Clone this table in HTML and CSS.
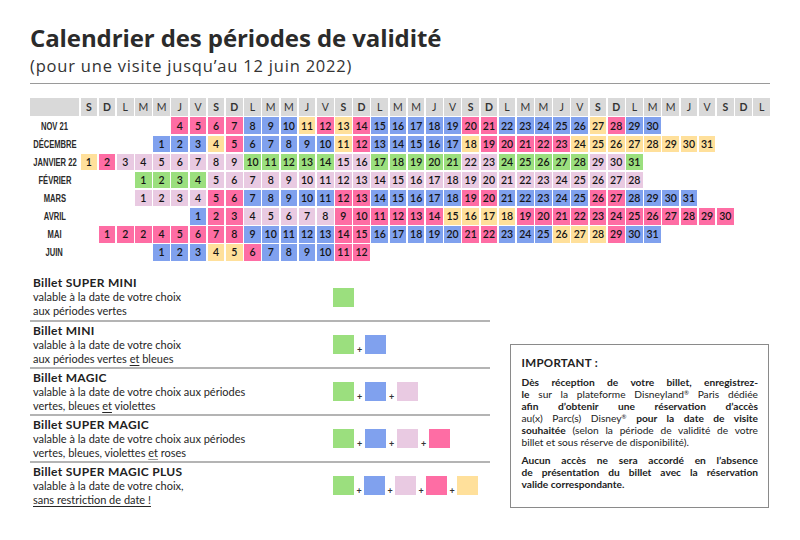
FILE: index.html
```html
<!DOCTYPE html>
<html lang="fr">
<head>
<meta charset="utf-8">
<title>Calendrier des périodes de validité</title>
<link rel="stylesheet" href="styles.css">
</head>
<body>
<div class="page">
  <h1 class="title">Calendrier des périodes de validité</h1>
  <p class="subtitle">(pour une visite jusqu’au 12 juin 2022)</p>
  <div class="rule"></div>

  <div class="cal">
    <div class="hd"></div>
    <div class="hd we">S</div><div class="hd we">D</div><div class="hd">L</div><div class="hd">M</div><div class="hd">M</div><div class="hd">J</div><div class="hd">V</div>
    <div class="hd we">S</div><div class="hd we">D</div><div class="hd">L</div><div class="hd">M</div><div class="hd">M</div><div class="hd">J</div><div class="hd">V</div>
    <div class="hd we">S</div><div class="hd we">D</div><div class="hd">L</div><div class="hd">M</div><div class="hd">M</div><div class="hd">J</div><div class="hd">V</div>
    <div class="hd we">S</div><div class="hd we">D</div><div class="hd">L</div><div class="hd">M</div><div class="hd">M</div><div class="hd">J</div><div class="hd">V</div>
    <div class="hd we">S</div><div class="hd we">D</div><div class="hd">L</div><div class="hd">M</div><div class="hd">M</div><div class="hd">J</div><div class="hd">V</div>
    <div class="hd we">S</div><div class="hd we">D</div><div class="hd">L</div>

    <div class="lbl"><span>NOV 21</span></div>
    <div class="d p s7">4</div><div class="d p">5</div><div class="d p">6</div><div class="d p">7</div><div class="d b">8</div><div class="d b">9</div><div class="d b">10</div><div class="d y">11</div><div class="d p">12</div><div class="d y">13</div><div class="d p">14</div><div class="d b">15</div><div class="d b">16</div><div class="d b">17</div><div class="d b">18</div><div class="d b">19</div><div class="d p">20</div><div class="d p">21</div><div class="d b">22</div><div class="d b">23</div><div class="d b">24</div><div class="d b">25</div><div class="d b">26</div><div class="d y">27</div><div class="d p">28</div><div class="d b">29</div><div class="d b">30</div>

    <div class="lbl"><span>DÉCEMBRE</span></div>
    <div class="d b s6">1</div><div class="d b">2</div><div class="d b">3</div><div class="d y">4</div><div class="d p">5</div><div class="d b">6</div><div class="d b">7</div><div class="d b">8</div><div class="d b">9</div><div class="d b">10</div><div class="d y">11</div><div class="d p">12</div><div class="d b">13</div><div class="d b">14</div><div class="d b">15</div><div class="d b">16</div><div class="d b">17</div><div class="d y">18</div><div class="d p">19</div><div class="d p">20</div><div class="d p">21</div><div class="d p">22</div><div class="d p">23</div><div class="d y">24</div><div class="d y">25</div><div class="d y">26</div><div class="d y">27</div><div class="d y">28</div><div class="d y">29</div><div class="d y">30</div><div class="d y">31</div>

    <div class="lbl"><span>JANVIER 22</span></div>
    <div class="d y s2">1</div><div class="d p">2</div><div class="d v">3</div><div class="d v">4</div><div class="d v">5</div><div class="d v">6</div><div class="d v">7</div><div class="d v">8</div><div class="d v">9</div><div class="d g">10</div><div class="d g">11</div><div class="d g">12</div><div class="d g">13</div><div class="d g">14</div><div class="d v">15</div><div class="d v">16</div><div class="d g">17</div><div class="d g">18</div><div class="d g">19</div><div class="d g">20</div><div class="d g">21</div><div class="d v">22</div><div class="d v">23</div><div class="d g">24</div><div class="d g">25</div><div class="d g">26</div><div class="d g">27</div><div class="d g">28</div><div class="d v">29</div><div class="d v">30</div><div class="d g">31</div>

    <div class="lbl"><span>FÉVRIER</span></div>
    <div class="d g s5">1</div><div class="d g">2</div><div class="d g">3</div><div class="d g">4</div><div class="d v">5</div><div class="d v">6</div><div class="d v">7</div><div class="d v">8</div><div class="d v">9</div><div class="d v">10</div><div class="d v">11</div><div class="d v">12</div><div class="d v">13</div><div class="d v">14</div><div class="d v">15</div><div class="d v">16</div><div class="d v">17</div><div class="d v">18</div><div class="d v">19</div><div class="d v">20</div><div class="d v">21</div><div class="d v">22</div><div class="d v">23</div><div class="d v">24</div><div class="d v">25</div><div class="d v">26</div><div class="d v">27</div><div class="d v">28</div>

    <div class="lbl"><span>MARS</span></div>
    <div class="d v s5">1</div><div class="d v">2</div><div class="d v">3</div><div class="d v">4</div><div class="d p">5</div><div class="d p">6</div><div class="d b">7</div><div class="d b">8</div><div class="d b">9</div><div class="d b">10</div><div class="d b">11</div><div class="d p">12</div><div class="d p">13</div><div class="d b">14</div><div class="d b">15</div><div class="d b">16</div><div class="d b">17</div><div class="d b">18</div><div class="d p">19</div><div class="d p">20</div><div class="d b">21</div><div class="d b">22</div><div class="d b">23</div><div class="d b">24</div><div class="d b">25</div><div class="d p">26</div><div class="d p">27</div><div class="d b">28</div><div class="d b">29</div><div class="d b">30</div><div class="d b">31</div>

    <div class="lbl"><span>AVRIL</span></div>
    <div class="d b s8">1</div><div class="d p">2</div><div class="d p">3</div><div class="d v">4</div><div class="d v">5</div><div class="d v">6</div><div class="d v">7</div><div class="d v">8</div><div class="d p">9</div><div class="d p">10</div><div class="d p">11</div><div class="d p">12</div><div class="d p">13</div><div class="d p">14</div><div class="d y">15</div><div class="d y">16</div><div class="d y">17</div><div class="d y">18</div><div class="d p">19</div><div class="d p">20</div><div class="d p">21</div><div class="d p">22</div><div class="d p">23</div><div class="d p">24</div><div class="d p">25</div><div class="d p">26</div><div class="d p">27</div><div class="d p">28</div><div class="d p">29</div><div class="d p">30</div>

    <div class="lbl"><span>MAI</span></div>
    <div class="d p s3">1</div><div class="d p">2</div><div class="d p">2</div><div class="d p">4</div><div class="d p">5</div><div class="d p">6</div><div class="d p">7</div><div class="d p">8</div><div class="d b">9</div><div class="d b">10</div><div class="d b">11</div><div class="d b">12</div><div class="d b">13</div><div class="d p">14</div><div class="d p">15</div><div class="d b">16</div><div class="d b">17</div><div class="d b">18</div><div class="d b">19</div><div class="d b">20</div><div class="d p">21</div><div class="d p">22</div><div class="d b">23</div><div class="d b">24</div><div class="d b">25</div><div class="d y">26</div><div class="d y">27</div><div class="d y">28</div><div class="d p">29</div><div class="d b">30</div><div class="d b">31</div>

    <div class="lbl"><span>JUIN</span></div>
    <div class="d b s6">1</div><div class="d b">2</div><div class="d b">3</div><div class="d y">4</div><div class="d y">5</div><div class="d p">6</div><div class="d b">7</div><div class="d b">8</div><div class="d b">9</div><div class="d b">10</div><div class="d p">11</div><div class="d p">12</div>
  </div>

  <div class="bottom">
    <div class="legend">
      <div class="tk">
        <div class="tk-text">
          <div class="tk-name">Billet SUPER MINI</div>
          <div>valable à la date de votre choix</div>
          <div>aux périodes vertes</div>
        </div>
        <div class="sw"><i class="g"></i></div>
      </div>
      <div class="tk">
        <div class="tk-text">
          <div class="tk-name">Billet MINI</div>
          <div>valable à la date de votre choix</div>
          <div>aux périodes vertes <u>et</u> bleues</div>
        </div>
        <div class="sw"><i class="g"></i><span class="plus">+</span><i class="b"></i></div>
      </div>
      <div class="tk">
        <div class="tk-text">
          <div class="tk-name">Billet MAGIC</div>
          <div>valable à la date de votre choix aux périodes</div>
          <div>vertes, bleues <u>et</u> violettes</div>
        </div>
        <div class="sw"><i class="g"></i><span class="plus">+</span><i class="b"></i><span class="plus">+</span><i class="v"></i></div>
      </div>
      <div class="tk">
        <div class="tk-text">
          <div class="tk-name">Billet SUPER MAGIC</div>
          <div>valable à la date de votre choix aux périodes</div>
          <div>vertes, bleues, violettes <u class="grey">et</u> roses</div>
        </div>
        <div class="sw"><i class="g"></i><span class="plus">+</span><i class="b"></i><span class="plus">+</span><i class="v"></i><span class="plus">+</span><i class="p"></i></div>
      </div>
      <div class="tk">
        <div class="tk-text">
          <div class="tk-name">Billet SUPER MAGIC PLUS</div>
          <div>valable à la date de votre choix,</div>
          <div><u>sans restriction de date !</u></div>
        </div>
        <div class="sw tight"><i class="g"></i><span class="plus">+</span><i class="b"></i><span class="plus">+</span><i class="v"></i><span class="plus">+</span><i class="p"></i><span class="plus">+</span><i class="y"></i></div>
      </div>
    </div>

    <div class="imp">
      <p class="imp-h">IMPORTANT :</p>
      <p class="imp-p">
        <span class="ln"><b>Dès réception de votre billet, enregistrez-</b></span>
        <span class="ln"><b>le</b> sur la plateforme Disneyland<sup>®</sup> Paris dédiée</span>
        <span class="ln"><b>afin d’obtenir une réservation d’accès</b></span>
        <span class="ln">au(x) Parc(s) Disney<sup>®</sup> <b>pour la date de visite</b></span>
        <span class="ln"><b>souhaitée</b> (selon la période de validité de votre</span>
        <span class="ln last">billet et sous réserve de disponibilité).</span>
      </p>
      <p class="imp-p strong">
        <span class="ln">Aucun accès ne sera accordé en l’absence</span>
        <span class="ln">de présentation du billet avec la réservation</span>
        <span class="ln last">valide correspondante.</span>
      </p>
    </div>
  </div>
</div>
</body>
</html>
```

FILE: styles.css
```css
* { box-sizing: border-box; }

body {
  margin: 0;
  background: #ffffff;
  font-family: Lato, "Liberation Sans", sans-serif;
  color: #222222;
}

.page {
  width: 800px;
  padding: 22.5px 30px 0 30px;
}

.title {
  margin: 0;
  font: 700 24px/30px "Open Sans", Lato, sans-serif;
  letter-spacing: -0.1px;
  color: #2b2b2b;
}

.subtitle {
  margin: 4.1px 0 0 0;
  font: 400 16.5px/17px "Open Sans", Lato, sans-serif;
  letter-spacing: 0.8px;
  color: #333333;
}

.rule {
  height: 1px;
  background: #9a9a9a;
  margin-top: 9.9px;
}

/* calendar */
.cal {
  margin-top: 14px;
  display: grid;
  grid-template-columns: 49px repeat(38, 1fr);
  grid-template-rows: 17.5px;
  grid-auto-rows: 16.6px;
  column-gap: 1.5px;
  row-gap: 1.5px;
}

.hd {
  background: #d9d9d9;
  display: flex;
  align-items: center;
  justify-content: center;
  font: 400 10.5px Lato, sans-serif;
  color: #333333;
}
.hd.we { font-weight: 700; }

.lbl {
  grid-column: 1;
  display: flex;
  align-items: center;
  justify-content: center;
  white-space: nowrap;
}
.lbl span {
  display: inline-block;
  font: 700 11.5px "Liberation Sans", sans-serif;
  color: #2a2a2a;
  transform: scaleX(0.66);
}

.d {
  display: flex;
  align-items: center;
  justify-content: center;
  font: 600 10.5px Lato, sans-serif;
  color: #141414;
}

.g { background: #9bdf7e; }
.b { background: #80a1ee; }
.p { background: #fe6da4; }
.y { background: #ffe09b; }
.v { background: #e9cae2; }

.s2 { grid-column-start: 2; }
.s3 { grid-column-start: 3; }
.s5 { grid-column-start: 5; }
.s6 { grid-column-start: 6; }
.s7 { grid-column-start: 7; }
.s8 { grid-column-start: 8; }

/* bottom */
.bottom {
  display: flex;
  align-items: flex-start;
  margin-top: 13.4px;
}

.legend {
  width: 460px;
}

.tk {
  display: flex;
  align-items: center;
  height: 47px;
  border-top: 2px solid #b4b4b4;
  padding-left: 3px;
}
.tk:first-child {
  border-top: 0;
  height: 46px;
}

.tk-text {
  width: 300px;
  font: 400 11px/14px Lato, sans-serif;
  color: #262626;
}
.tk-name {
  font-weight: 700;
  font-size: 12px;
  letter-spacing: 0.3px;
  color: #222222;
}
.tk-text u { text-underline-offset: 2px; }
.tk-text u.grey { text-decoration-color: #999999; }

.sw {
  display: flex;
  align-items: flex-end;
}
.sw i {
  display: block;
  width: 21px;
  height: 19px;
}
.plus {
  width: 11px;
  text-align: center;
  font: 700 9px/9px Lato, sans-serif;
  color: #333333;
}
.sw.tight .plus { width: 10px; }

/* important box */
.imp {
  width: 259px;
  height: 164px;
  margin: 70px 0 0 20px;
  border: 1.5px solid #8a8a8a;
  padding: 11px 10px 0 10.5px;
  color: #222222;
}
.imp p { margin: 0; }
.imp-h {
  font: 700 11.5px/14px Lato, sans-serif;
  letter-spacing: 0.3px;
  margin-bottom: 6px !important;
}
.imp-p {
  font: 400 10.2px/12px Lato, sans-serif;
}
.imp-p b, .imp-p.strong { font-weight: 700; }
.imp-p.strong { margin-top: 6px !important; }
.ln {
  display: block;
  text-align: justify;
  text-align-last: justify;
}
.ln.last { text-align-last: left; }
.imp sup {
  font-size: 6px;
  line-height: 0;
  vertical-align: 3px;
}
```
